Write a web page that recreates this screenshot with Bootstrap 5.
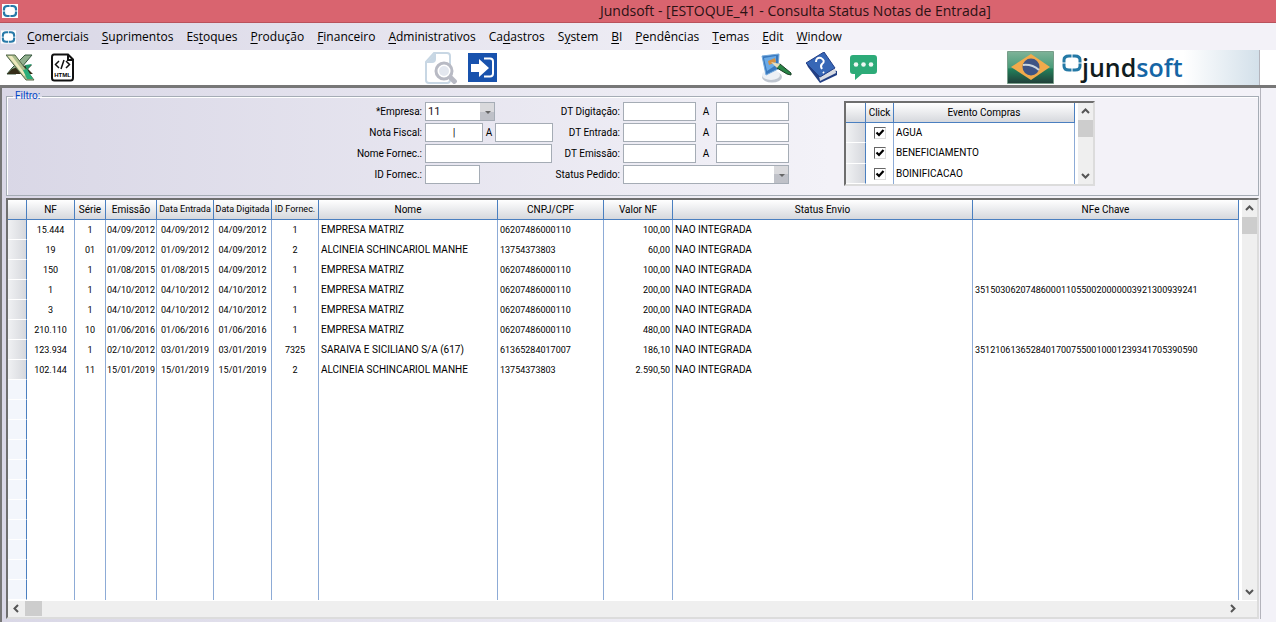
<!DOCTYPE html>
<html lang="pt-BR">
<head>
<meta charset="utf-8">
<meta name="viewport" content="width=device-width, initial-scale=1">
<title>Jundsoft - Consulta Status Notas de Entrada</title>
<link href="https://cdn.jsdelivr.net/npm/bootstrap@5.3.0/dist/css/bootstrap.min.css" rel="stylesheet">
<style>
body{font:10px/16px Roboto,"Liberation Sans",sans-serif;color:#000;background:linear-gradient(90deg,#d9d7e6,#f3f2f8 65%)}
.titlebar{height:23px;background:#d9646f;border-bottom:1px solid #b9525c;padding-left:2px;font:14px/22px "Open Sans",sans-serif;color:#2b1214}
.titlebar h1{font:inherit;padding-left:582px;white-space:nowrap}
.menubar{height:27px;padding-left:1px;font:12px/26px "Open Sans",sans-serif}
.menubar a{color:#000;text-decoration:none;white-space:nowrap}
.menus{gap:13px;margin-left:11px}
.toolbar-main{height:35px;background:#fff}
.toolbar-main button{border:0;background:none;padding:0;line-height:0}
.tools{padding:0 6px;width:425px;gap:15px}
.tools-mid{width:335px;gap:11px}
.tools-right{width:247px;gap:12px}
.brand-zone{height:35px;gap:8px;border-right:1px solid #b4b4bc;background:linear-gradient(90deg,#fff 70%,#d3e0ea)}
.brand-name{font:600 25px/35px "Open Sans",sans-serif;color:#101c20}
.brand-name span{color:#1565a5}
.client{border-top:3px solid #777;border-left:2px solid #777;padding:0 0 4px 4px}
.inner{border-right:1px solid #b4b4bc;padding:2px 1px 0 0;margin-right:15px}
.filter{border:1px solid #a5acb5;box-shadow:inset 1px 1px #fff;height:106px;padding:0 0 0 342px;margin:0 0 2px;min-width:0}
.filter legend{float:none;width:auto;margin:0 0 0 -336px;padding:0 2px;font-size:10px;line-height:12px;color:#0046c8}
.rowset{display:flex;flex-direction:column;gap:2px}
.line{display:flex;align-items:center;height:19px}
.line label{white-space:nowrap}
.line>label:first-child{text-align:right;padding-right:3px}
.g1 .line>label:first-child{width:76px}
.g2 .line>label:first-child{width:70px}
.line input,.line select{height:19px;border:1px solid #a5acb5;background:#fff;padding:0 2px;border-radius:0;font-size:11px;color:#201020;outline:0}
.line .sep{text-align:center}
.g1 .sep{width:12px}.g2 .sep{width:20px}
.w-a{width:58px}.w-b{width:55px}.w-c{width:127px}.w-d{width:73px}
.line select{appearance:none;background:#fff linear-gradient(#d9d9dc 50%,#bfc1c8 50%) right/14px 100% no-repeat}
.combo{position:relative;height:19px}
.combo::after{content:"";position:absolute;right:4px;top:9px;border:3px solid transparent;border-top-color:#666;pointer-events:none}
.combo .w-e{width:70px}.combo .w-f{width:166px}
.sunk{border:2px solid;border-color:#6e6e6e #dcdcdc #dcdcdc #6e6e6e;background:#fff}
.gridtab{border-collapse:separate;border-spacing:0;table-layout:fixed;width:100%}
.gridtab th,.gridtab td{height:20px;padding:0 2px;line-height:20px;white-space:nowrap;overflow:hidden;border-right:1px solid #8dabd6;text-align:left}
.gridtab th{font-weight:400;line-height:19px;text-align:center;padding:0;border-right-color:#4a7fc0;border-bottom:1px solid #4a7fc0;background:linear-gradient(#fff,#d6d8dd)}
.gridtab td.c{text-align:center;padding:0}
.gridtab td.r{text-align:right}
.gridtab td.num,.gridtab th.tight{font-size:9px}
.gridtab td:first-child{border-right-color:#4a7fc0;border-bottom:1px solid #fff;background:linear-gradient(90deg,#f0f1f3,#d6d8dd)}
.gridtab tr.blank td:first-child{background:#f3f6fc}
.events{width:251px;height:85px;margin:-1px 0 0 55px;overflow:hidden}
.events label{display:block}
.events input{width:12px;height:12px;appearance:none;border:1px solid;border-color:#666 #ddd #ddd #666;background:#fff url("data:image/svg+xml,%3Csvg xmlns='http://www.w3.org/2000/svg' viewBox='0 0 10 10'%3E%3Cpath d='M1.500 4.500 4 7 8.500 2' fill='none' stroke='%23000' stroke-width='2.200'/%3E%3C/svg%3E");display:block;margin:0 auto}
.vbar{width:18px;flex:none;background:#efefef;border-left:3px solid #fff}
.vbar svg,.hbar svg{display:block}
.thumb{background:#cdcdcd}
.vbar .thumb{height:17px}
.hbar .thumb{width:17px;height:15px}
.hbar{height:17px;background:#efefef;border-top:1px solid #fff}
u{text-underline-offset:2px}
</style>
</head>
<body>
<svg width="0" height="0" class="position-absolute" aria-hidden="true">
<symbol id="ring" viewBox="0 0 16 14"><path fill="#fff" d="M0 0h16v14H0z"/><g fill="none" stroke="#2779a8" stroke-width="2.200"><path d="M7.600 2H5.500Q2 2 2 5v1.600M8.400 2h2.100Q14 2 14 5v1.600M2 7.400V9q0 3 3.500 3h2.100M14 7.400V9q0 3-3.500 3H8.400"/></g></symbol>
<symbol id="up" viewBox="0 0 15 17"><path d="m4 10 3.500-3.500L11 10" fill="none" stroke="#555" stroke-width="2"/></symbol>
<symbol id="down" viewBox="0 0 15 17"><path d="m4 7 3.500 3.500L11 7" fill="none" stroke="#555" stroke-width="2"/></symbol>
</svg>
<header>
<div class="titlebar d-flex align-items-center"><svg width="16" height="14" class="flex-shrink-0"><use href="#ring"/></svg><h1 class="m-0">Jundsoft - [ESTOQUE_41 - Consulta Status Notas de Entrada]</h1></div>
<nav class="menubar d-flex align-items-center"><svg width="15" height="14"><use href="#ring"/></svg>
<div class="menus d-flex">
<a href="#"><u>C</u>omerciais</a><a href="#"><u>S</u>uprimentos</a><a href="#">Es<u>t</u>oques</a><a href="#"><u>P</u>rodução</a><a href="#"><u>F</u>inanceiro</a><a href="#"><u>A</u>dministrativos</a><a href="#">Ca<u>d</u>astros</a><a href="#">S<u>y</u>stem</a><a href="#"><u>B</u>I</a><a href="#"><u>P</u>endências</a><a href="#"><u>T</u>emas</a><a href="#"><u>E</u>dit</a><a href="#"><u>W</u>indow</a>
</div></nav>
<div class="toolbar-main d-flex align-items-center">
<div class="tools d-flex align-items-center">
<button aria-label="Excel"><svg width="29" height="27" viewBox="0 0 29 27"><path d="M19 1h7L10 20H1l5-6z" fill="#8fae8d" stroke="#35563d"/><path d="m15 12 11-1-4 4 5 5H12L1 20l5-5z" fill="#352d18"/><path d="m19 11 7-1-5 6z" fill="#239a6c"/><path d="M0 1h9l19 25h-8z" fill="#a9bd8d" stroke="#55684a"/><path d="M2 2h4l14 19-2 1z" fill="#eee9bd"/><path d="m17 16 4-1 6 10h-6z" fill="#29ad79"/></svg></button>
<button aria-label="HTML"><svg width="25" height="29" viewBox="0 0 25 29"><path d="M4 1.500h14l5 5V25q0 2.500-2.500 2.500h-16Q2 27.500 2 25V4q0-2.500 2-2.500zM18 2v5h5" fill="#fff" stroke="#111" stroke-width="2"/><path d="m9 8-3.500 3.500L9 15m7-7 3.500 3.500L16 15M14 7l-3 9" fill="none" stroke="#111" stroke-width="1.500"/><text x="12.500" y="23.500" text-anchor="middle" font-family="Liberation Sans" font-size="6" font-weight="700">HTML</text></svg></button>
</div>
<div class="tools-mid d-flex align-items-center">
<button aria-label="Visualizar"><svg width="32" height="33" viewBox="0 0 32 33"><path d="M9 2h13q3 0 3 3v24q0 3-3 3H4q-3 0-3-3V11z" fill="#fff" stroke="#c8d7e4" stroke-width="2"/><path d="M1 12 11 1v7q0 4-4 4z" fill="#c8d7e4"/><path d="m24 25 7 7" stroke="#b8bac4" stroke-width="5"/><circle cx="19" cy="20" r="8" fill="#fff" stroke="#b8bac4" stroke-width="3"/><circle cx="19" cy="20" r="5" fill="#e3e7ef"/></svg></button>
<button aria-label="Sair"><svg width="29" height="29" viewBox="0 0 29 29"><path fill="#1852ad" d="M0 0h29v29H0z"/><path d="M3 11h8V6l10 9-10 9v-5H3z" fill="#fff"/><path d="M16 5.500h6q3 0 3 3v12q0 3-3 3h-6" fill="none" stroke="#fff" stroke-width="2"/></svg></button>
</div>
<div class="tools-right d-flex align-items-center">
<button aria-label="Personalizar"><svg width="33" height="30" viewBox="0 0 33 30"><ellipse cx="12" cy="24" rx="10" ry="5.500" fill="#bfc6d0"/><ellipse cx="11" cy="22" rx="9" ry="5" fill="#edf0f5"/><path d="M2 3 19 1l-1 15-12 6z" fill="#3978bd" stroke="#74a9dc"/><path d="m4 5 12-2v9L7 18z" fill="#6baae6"/><path d="m8 8 7-3 1 4-7 3z" fill="#d59042"/><path d="m17 12 3-1 11 9v2l-4-1-10-6z" fill="#288545" stroke="#183e25"/><path d="m11 9 9 2-3 4z" fill="#e9ddbb"/></svg></button>
<button aria-label="Ajuda" class="ms-n1"><svg width="33" height="32" viewBox="0 0 33 32"><path d="m1 11 2 4 12 16 17-8v-4z" fill="#223f83"/><path d="m14 24 16-8 1 5-16 8z" fill="#d9dce3"/><path d="M1 11 19 0l11 16-15 9z" fill="#3767b6" stroke="#213e87"/><path d="M11 10q0-5 5-4 5 3 1 6-2 2 0 5M18 20l1 1" fill="none" stroke="#fff" stroke-width="2"/></svg></button>
<button aria-label="Chat"><svg width="27" height="27" viewBox="0 0 27 27"><path d="M3 1h21q3 0 3 3v13q0 3-3 3H12l-7 6v-6H3q-3 0-3-3V4q0-3 3-3z" fill="#2dab78"/><g fill="#eef7f2"><circle cx="6" cy="10.500" r="2.300"/><circle cx="13.500" cy="10.500" r="2.300"/><circle cx="21" cy="10.500" r="2.300"/></g></svg></button>
</div>
<div class="brand-zone d-flex align-items-center flex-grow-1 me-3">
<svg width="47" height="33" viewBox="0 0 47 33"><defs><linearGradient id="fl" x2="0" y2="1"><stop stop-color="#7fb398"/><stop offset=".5" stop-color="#4a9b79"/><stop offset=".55" stop-color="#23805b"/><stop offset="1" stop-color="#203e38"/></linearGradient></defs><path fill="url(#fl)" stroke="#789e8a" d="M.5.5h46v32H.5z"/><path d="m4 16 20-13 19 13-19 13z" fill="#f1aa4b"/><circle cx="24" cy="16" r="8.500" fill="#3e5484"/><path d="M16 14q9-1 16 5" fill="none" stroke="#cbd6df" stroke-width="2"/></svg>
<div class="d-flex align-items-center"><svg width="20" height="19" viewBox="0 0 20 19" class="align-self-start mt-1"><g fill="none" stroke="#2479a6" stroke-width="3"><path d="M9.500 2H7Q2 2 2 6v2.500M10.500 2H13q5 0 5 4v2.500M2 9.500V12q0 4 5 4h2.500M18 9.500V12q0 4-5 4h-2.500"/></g></svg><div class="brand-name">jund<span>soft</span></div></div>
</div></div>
</header>
<main class="client"><div class="inner">
<fieldset class="filter"><legend>Filtro:</legend>
<div class="d-flex">
<div class="rowset g1">
<div class="line"><label for="emp">*Empresa:</label><div class="combo"><select id="emp" class="w-e"><option>11</option></select></div></div>
<div class="line"><label for="nf1">Nota Fiscal:</label><input id="nf1" class="w-a text-center" value="|"><label class="sep" for="nf2">A</label><input id="nf2" class="w-a"></div>
<div class="line"><label for="nom">Nome Fornec.:</label><input id="nom" class="w-c"></div>
<div class="line"><label for="idf">ID Fornec.:</label><input id="idf" class="w-b"></div>
</div>
<div class="rowset g2">
<div class="line"><label for="d1">DT Digitação:</label><input id="d1" class="w-d"><label class="sep" for="d2">A</label><input id="d2" class="w-d"></div>
<div class="line"><label for="d3">DT Entrada:</label><input id="d3" class="w-d"><label class="sep" for="d4">A</label><input id="d4" class="w-d"></div>
<div class="line"><label for="d5">DT Emissão:</label><input id="d5" class="w-d"><label class="sep" for="d6">A</label><input id="d6" class="w-d"></div>
<div class="line"><label for="st">Status Pedido:</label><div class="combo"><select id="st" class="w-f"><option></option></select></div></div>
</div>
<div class="events sunk d-flex">
<table class="gridtab"><colgroup><col style="width:20px"><col style="width:28px"><col></colgroup>
<thead><tr><th></th><th>Click</th><th>Evento Compras</th></tr></thead>
<tbody><tr><td></td><td class="c"><input type="checkbox" id="e1" checked></td><td><label for="e1">AGUA</label></td></tr>
<tr><td></td><td class="c"><input type="checkbox" id="e2" checked></td><td><label for="e2">BENEFICIAMENTO</label></td></tr>
<tr><td></td><td class="c"><input type="checkbox" id="e3" checked></td><td><label for="e3">BOINIFICACAO</label></td></tr></tbody></table>
<div class="vbar d-flex flex-column"><svg width="15" height="17"><use href="#up"/></svg><div class="thumb"></div><svg width="15" height="17" class="mt-auto"><use href="#down"/></svg></div>
</div></div></fieldset>
<section class="sunk">
<div class="d-flex">
<table class="gridtab" id="notas"><colgroup><col style="width:19px"><col style="width:48px"><col style="width:31px"><col style="width:51px"><col style="width:57px"><col style="width:58px"><col style="width:47px"><col style="width:179px"><col style="width:106px"><col style="width:69px"><col style="width:300px"><col></colgroup>
<thead><tr><th></th><th>NF</th><th>Série</th><th>Emissão</th><th class="tight">Data Entrada</th><th class="tight">Data Digitada</th><th class="tight">ID Fornec.</th><th>Nome</th><th>CNPJ/CPF</th><th>Valor NF</th><th>Status Envio</th><th>NFe Chave</th></tr></thead>
<tbody></tbody></table>
<div class="vbar d-flex flex-column"><svg width="15" height="17"><use href="#up"/></svg><div class="thumb"></div><svg width="15" height="17" class="mt-auto"><use href="#down"/></svg></div>
</div>
<div class="hbar d-flex"><svg width="17" height="15" viewBox="0 0 17 15"><path d="M10 4 6.500 7.500 10 11" fill="none" stroke="#555" stroke-width="2"/></svg><div class="thumb"></div><svg width="17" height="15" viewBox="0 0 17 15" class="ms-auto me-3"><path d="m7 4 3.500 3.500L7 11" fill="none" stroke="#555" stroke-width="2"/></svg></div>
</section>
</div></main>
<script src="https://cdn.jsdelivr.net/npm/bootstrap@5.3.0/dist/js/bootstrap.bundle.min.js"></script>
<script>
const notas=[
["15.444","1","04/09/2012","04/09/2012","04/09/2012","1","EMPRESA MATRIZ","06207486000110","100,00","NAO INTEGRADA",""],
["19","01","01/09/2012","01/09/2012","04/09/2012","2","ALCINEIA SCHINCARIOL MANHE","13754373803","60,00","NAO INTEGRADA",""],
["150","1","01/08/2015","01/08/2015","04/09/2012","1","EMPRESA MATRIZ","06207486000110","100,00","NAO INTEGRADA",""],
["1","1","04/10/2012","04/10/2012","04/10/2012","1","EMPRESA MATRIZ","06207486000110","200,00","NAO INTEGRADA","35150306207486000110550020000003921300939241"],
["3","1","04/10/2012","04/10/2012","04/10/2012","1","EMPRESA MATRIZ","06207486000110","200,00","NAO INTEGRADA",""],
["210.110","10","01/06/2016","01/06/2016","01/06/2016","1","EMPRESA MATRIZ","06207486000110","480,00","NAO INTEGRADA",""],
["123.934","1","02/10/2012","03/01/2019","03/01/2019","7325","SARAIVA E SICILIANO S/A (617)","61365284017007","186,10","NAO INTEGRADA","35121061365284017007550010001239341705390590"],
["102.144","11","15/01/2019","15/01/2019","15/01/2019","2","ALCINEIA SCHINCARIOL MANHE","13754373803","2.590,50","NAO INTEGRADA",""]];
const body=document.querySelector("#notas tbody");
for(let i=0;i<19;i++){
  const tr=body.insertRow(), d=notas[i];
  if(!d) tr.className="blank";
  tr.insertCell();
  for(let j=0;j<11;j++){
    const td=tr.insertCell();
    if(d) td.textContent=d[j];
    if(j<6) td.classList.add("c");
    if(j===8) td.classList.add("r");
    if(j!==6&&j!==9) td.classList.add("num");
  }
}
</script>
</body>
</html>
